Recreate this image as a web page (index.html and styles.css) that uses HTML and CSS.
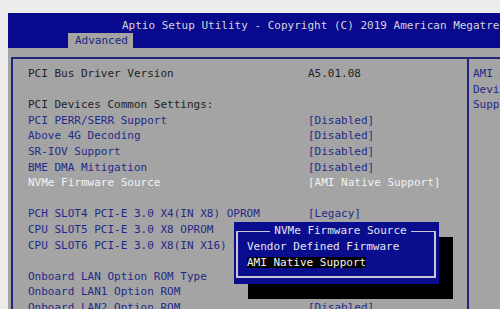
FILE: index.html
```html
<!DOCTYPE html>
<html lang="en">
<head>
  <meta charset="UTF-8">
  <meta name="viewport" content="width=device-width, initial-scale=1">
  <title>Aptio Setup Utility</title>
  <link rel="stylesheet" href="styles.css">
</head>
<body>
  <div class="screen">
    <div class="topbar">
      <div class="title">Aptio Setup Utility - Copyright (C) 2019 American Megatrends, Inc.</div>
      <div class="tabs">
        <span class="tab">Advanced</span>
      </div>
    </div>

    <div class="panel">
      <div class="frame">
        <div class="settings">
          <div class="row text"><span class="label">PCI Bus Driver Version</span><span class="value">A5.01.08</span></div>
          <div class="row"></div>
          <div class="row text"><span class="label">PCI Devices Common Settings:</span></div>
          <div class="row"><span class="label">PCI PERR/SERR Support</span><span class="value">[Disabled]</span></div>
          <div class="row"><span class="label">Above 4G Decoding</span><span class="value">[Disabled]</span></div>
          <div class="row"><span class="label">SR-IOV Support</span><span class="value">[Disabled]</span></div>
          <div class="row"><span class="label">BME DMA Mitigation</span><span class="value">[Disabled]</span></div>
          <div class="row selected"><span class="label">NVMe Firmware Source</span><span class="value">[AMI Native Support]</span></div>
          <div class="row"></div>
          <div class="row"><span class="label">PCH SLOT4 PCI-E 3.0 X4(IN X8) OPROM</span><span class="value">[Legacy]</span></div>
          <div class="row"><span class="label">CPU SLOT5 PCI-E 3.0 X8 OPROM</span><span class="value">[Legacy]</span></div>
          <div class="row"><span class="label">CPU SLOT6 PCI-E 3.0 X8(IN X16) OPROM</span><span class="value">[Legacy]</span></div>
          <div class="row"></div>
          <div class="row"><span class="label">Onboard LAN Option ROM Type</span><span class="value">[Legacy]</span></div>
          <div class="row"><span class="label">Onboard LAN1 Option ROM</span><span class="value">[PXE]</span></div>
          <div class="row"><span class="label">Onboard LAN2 Option ROM</span><span class="value">[Disabled]</span></div>
        </div>
        <div class="help">
          <div class="row">AMI Native</div>
          <div class="row">Device</div>
          <div class="row">Support</div>
        </div>
      </div>

      <!-- option popup for the selected item -->
      <div class="popup">
        <div class="popup-frame">
          <div class="popup-title"><span>NVMe Firmware Source</span></div>
          <div class="option">Vendor Defined Firmware</div>
          <div class="option"><span class="current">AMI Native Support</span></div>
        </div>
      </div>
    </div>
  </div>
</body>
</html>
```

FILE: styles.css
```css
body {
  margin: 0;
  background: #ececec;
  font-family: "DejaVu Sans Mono", "Liberation Mono", monospace;
  font-size: 11px;
  overflow: hidden;
  height: 309px;
}
.screen {
  margin: 13px 0 0 8px;
  width: 560px;
}
.topbar {
  background: #08098c;
  height: 35px;
  display: flex;
  flex-direction: column;
}
.title {
  color: #d4d4dc;
  line-height: 14px;
  padding: 6px 0 0 114px;
  white-space: nowrap;
}
.tabs {
  margin-top: auto;
  padding-left: 60px;
  display: flex;
}
.tab {
  background: #a4a4a4;
  color: #1c2580;
  height: 15px;
  line-height: 16px;
  padding: 0 5px 0 7px;
}
.panel {
  position: relative;
  background: #a4a4a4;
  padding: 9px 0 0 3px;
  height: 260px;
}
.frame {
  display: flex;
  border-top: 2px solid #22267a;
  border-left: 2px solid #22267a;
  height: 100%;
}
.settings {
  width: 439px;
  padding: 7px 0 0 15px;
  flex-shrink: 0;
}
.row {
  display: flex;
  height: 15.6px;
  line-height: 15.6px;
  white-space: nowrap;
  color: #1f2a88;
}
.row.text {
  color: #222226;
}
.row.selected {
  color: #f2f2f2;
}
.label {
  width: 280px;
  flex-shrink: 0;
}
.help {
  border-left: 2px solid #22267a;
  padding: 7px 0 0 4px;
}
.popup {
  position: absolute;
  left: 226px;
  top: 174px;
  width: 200px;
  padding: 9px 3px 6px 2px;
  background: #0a0d8e;
  box-shadow: 14px 15px 0 #000;
}
.popup-frame {
  border: 2px solid #c8c8d4;
  border-top-width: 1.5px;
  padding: 0 0 6px 9px;
}
.popup-title {
  margin-top: -8.6px;
  height: 15.6px;
  line-height: 15.6px;
  text-align: center;
  color: #e6e6ee;
}
.popup-title span {
  background: #0a0d8e;
  padding: 0 4px;
}
.option {
  height: 15.6px;
  line-height: 15.6px;
  color: #e6e6ee;
  white-space: nowrap;
}
.current {
  display: inline-block;
  background: #000;
  color: #f4f4f4;
  line-height: 11px;
}
```
